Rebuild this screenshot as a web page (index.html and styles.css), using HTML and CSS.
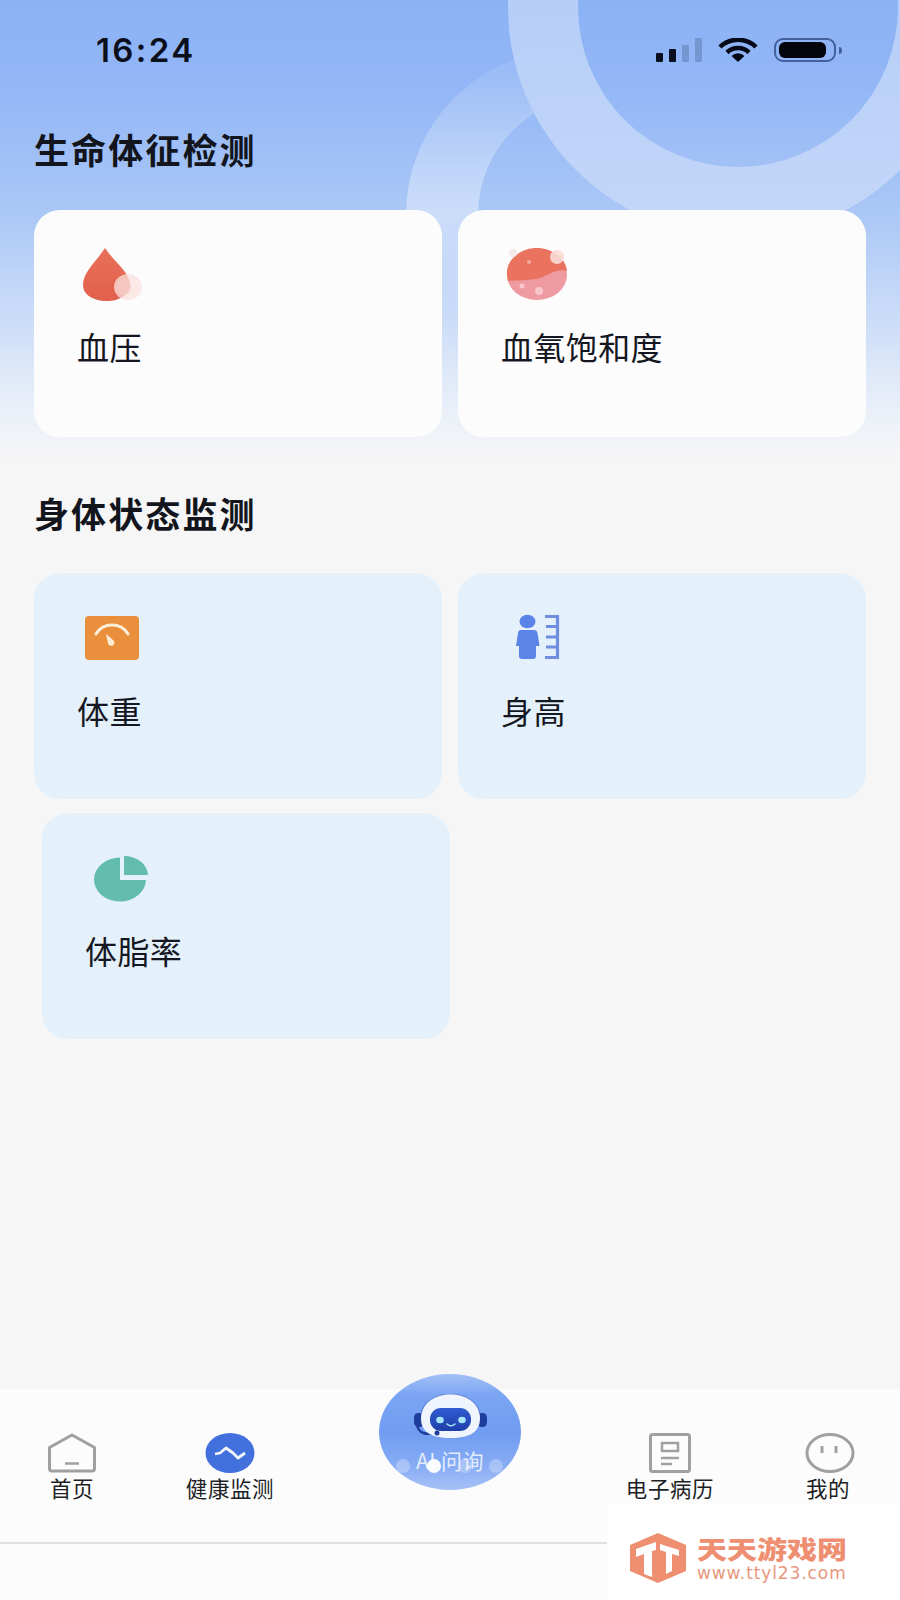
FILE: index.html
```html
<!DOCTYPE html>
<html lang="zh-CN">
<head>
<meta charset="utf-8">
<title>健康监测</title>
<link rel="stylesheet" href="styles.css">
</head>
<body>
<div class="page">
  <div class="backdrop">
    <svg class="rings" viewBox="0 0 900 460" width="900" height="460">
      <defs>
        <linearGradient id="smallRing" gradientUnits="userSpaceOnUse" x1="0" y1="60" x2="0" y2="310">
          <stop offset="0" stop-color="#fff" stop-opacity=".07"/>
          <stop offset=".6" stop-color="#fff" stop-opacity=".4"/>
          <stop offset="1" stop-color="#fff" stop-opacity="0"/>
        </linearGradient>
        <linearGradient id="bigRing" gradientUnits="userSpaceOnUse" x1="0" y1="0" x2="0" y2="240">
          <stop offset="0" stop-color="#b6cef8"/>
          <stop offset="1" stop-color="#c4d7f8"/>
        </linearGradient>
        <clipPath id="smallClip"><rect x="0" y="0" width="575" height="460"/></clipPath>
      </defs>
      <path clip-path="url(#smallClip)" fill-rule="evenodd" fill="url(#smallRing)" d="M406 215 A166 166 0 0 1 738 215 A166 166 0 0 1 406 215 Z M478 215 A120 120 0 0 0 718 215 A120 120 0 0 0 478 215 Z"/>
      <path fill-rule="evenodd" fill="url(#bigRing)" d="M508 7 A230 230 0 0 1 968 7 A230 230 0 0 1 508 7 Z M578 7 A160 160 0 0 0 898 7 A160 160 0 0 0 578 7 Z"/>
    </svg>
  </div>

  <header class="status">
    <span class="time">16:24</span>
    <div class="status-icons">
      <div class="signal"><i class="b1"></i><i class="b2"></i><i class="b3"></i><i class="b4"></i></div>
      <svg class="wifi" viewBox="0 0 40 24" width="40" height="24"><path d="M2 9 A26 26 0 0 1 38 9" fill="none" stroke="#060a18" stroke-width="4.5"/><path d="M9 14.5 A16 16 0 0 1 31 14.5" fill="none" stroke="#060a18" stroke-width="4.5"/><path d="M13.5 18 A9 9 0 0 1 26.500 18 L20 24 Z" fill="#060a18"/></svg>
      <div class="battery"><div class="battery-fill"></div></div>
      <div class="battery-nub"></div>
    </div>
  </header>

  <main class="content">
    <h2 class="section-title first">生命体征检测</h2>
    <div class="cards">
      <div class="card white">
        <svg class="card-icon" viewBox="0 0 70 56" width="70" height="56">
          <defs><linearGradient id="dropFill" x1="0" y1="0" x2="0" y2="1"><stop offset="0" stop-color="#e9705a"/><stop offset="1" stop-color="#e0604c"/></linearGradient></defs>
          <path d="M27 0 C36 14 52 24 52 37 C52 47 41 53 29 53 C16 53 5 47 5 37 C5 24 18 14 27 0 Z" fill="url(#dropFill)"/>
          <ellipse cx="50" cy="39" rx="14" ry="13" fill="#fbe3e0" opacity=".75"/>
          <ellipse cx="46" cy="39" rx="7" ry="8" fill="#f7c9c4" opacity=".6"/>
        </svg>
        <span class="card-label">血压</span>
      </div>
      <div class="card white">
        <svg class="card-icon" viewBox="0 0 70 56" width="70" height="56">
          <ellipse cx="35" cy="27" rx="30" ry="25" fill="#ee9aa0"/>
          <path d="M5 27 A30 25 0 0 1 65 23 C56 20 48 26 38 30 C28 33 14 32 6 33 Z" fill="#e9735f"/>
          <circle cx="55" cy="9" r="7" fill="#f9dcd8" opacity=".9"/>
          <circle cx="11" cy="5" r="4" fill="#f3e9e8"/>
          <circle cx="37" cy="43" r="4" fill="#f7c6cb"/>
          <circle cx="20" cy="38" r="2.500" fill="#f7c6cb"/>
          <circle cx="27" cy="14" r="2" fill="#f4a99c"/>
        </svg>
        <span class="card-label">血氧饱和度</span>
      </div>
    </div>

    <h2 class="section-title second">身体状态监测</h2>
    <div class="cards">
      <div class="card blue">
        <svg class="card-icon" viewBox="0 0 70 56" width="70" height="56">
          <rect x="7" y="5" width="54" height="44" rx="4" fill="#ea8f3c"/>
          <path d="M18 23 C25 11 43 11 50 23" fill="none" stroke="#fdeed8" stroke-width="3" stroke-linecap="round"/>
          <path d="M28 23 L35 29 A3.200 3.200 0 1 1 30 32 Z" fill="#fdeed8"/>
        </svg>
        <span class="card-label">体重</span>
      </div>
      <div class="card blue">
        <svg class="card-icon" viewBox="0 0 70 56" width="70" height="56">
          <ellipse cx="25.500" cy="10.500" rx="8" ry="6.800" fill="#5b84e8"/>
          <path d="M19 19 H32 C34 19 35 20 35.500 22 L37.500 35 H34 V45 C34 47 33 48 31 48 H20 C18 48 17 47 17 45 V35 H14 L16 22 C16.500 20 17 19 19 19 Z" fill="#5b84e8"/>
          <path d="M43 5.500 H55.500 V46.500 H43 M44 15.500 H55 M44 26 H55 M44 36 H55" fill="none" stroke="#6f8edf" stroke-width="3.200"/>
        </svg>
        <span class="card-label">身高</span>
      </div>
      <div class="card blue shifted">
        <svg class="card-icon" viewBox="0 0 70 56" width="70" height="56">
          <path d="M34 6.500 A26 22 0 1 0 60 29 H34 Z" fill="#62bdac"/>
          <path d="M38 5 A24 19.500 0 0 1 62 24 H38 Z" fill="#62bdac"/>
        </svg>
        <span class="card-label">体脂率</span>
      </div>
    </div>
  </main>

  <nav class="tabbar">
    <div class="tabs">
      <div class="tab">
        <svg viewBox="0 0 50 40" width="50" height="40"><path d="M2.500 14.500 L25 2 L47.500 14.500 V35.500 Q47.500 38 45 38 H5 Q2.500 38 2.500 35.500 Z" fill="none" stroke="#a0a0a0" stroke-width="3" stroke-linejoin="round"/><path d="M18 30.500 H32" stroke="#a0a0a0" stroke-width="2.500"/></svg>
        <span class="tab-label">首页</span>
      </div>
      <div class="tab">
        <svg viewBox="0 0 50 40" width="50" height="40"><ellipse cx="25" cy="20" rx="24.500" ry="20" fill="#4271de"/><path d="M10 21 L15 20 L21 15 L28 20 L33 25 L40 20" fill="none" stroke="#f4f7fd" stroke-width="2.800" stroke-linejoin="round"/></svg>
        <span class="tab-label">健康监测</span>
      </div>
      <div class="ai-ball">
        <svg class="robot" viewBox="0 0 80 46" width="80" height="46">
          <defs><linearGradient id="visor" x1="0" y1="0" x2="0" y2="1"><stop offset="0" stop-color="#2f5bd2"/><stop offset="1" stop-color="#1f3fa8"/></linearGradient></defs>
          <rect x="4" y="19" width="10" height="14" rx="4.500" fill="#1f3d9c"/>
          <rect x="67" y="19" width="10" height="14" rx="4.500" fill="#1f3d9c"/>
          <path d="M7 30 C8 40 16 41 27 39" fill="none" stroke="#1f3d9c" stroke-width="2.500" stroke-linecap="round"/>
          <path d="M40.500 0 C58 0 70 10 70 24 C70 38 60 44 40.500 44 C21 44 11 38 11 24 C11 10 23 0 40.500 0 Z" fill="#f0f4fd"/>
          <path d="M11 20 C13 9 24 0 40.500 0 C57 0 68 9 70 20" fill="none" stroke="#3a5fc4" stroke-width="1.200" opacity=".6"/>
          <circle cx="27" cy="39" r="2.500" fill="#1f3d9c"/>
          <rect x="20" y="14" width="41" height="23" rx="11" fill="url(#visor)"/>
          <ellipse cx="30" cy="26" rx="3.800" ry="3.200" fill="#a8e4fb"/>
          <ellipse cx="52" cy="26" rx="3.800" ry="3.200" fill="#a8e4fb"/>
          <path d="M37 30 Q41 33.500 45 30" fill="none" stroke="#a8e4fb" stroke-width="1.600" stroke-linecap="round"/>
        </svg>
        <span class="ai-label">AI 问询</span>
        <div class="dots"><i class="dot"></i><i class="dot strong"></i><i class="dot"></i><i class="dot"></i></div>
      </div>
      <div class="tab">
        <svg viewBox="0 0 42 40" width="42" height="40"><rect x="1.500" y="1.500" width="39" height="37" rx="2" fill="none" stroke="#a0a0a0" stroke-width="3"/><rect x="13" y="10" width="16" height="8" fill="none" stroke="#a0a0a0" stroke-width="2.500"/><path d="M12 25 H30 M12 31 H23" stroke="#a0a0a0" stroke-width="2.500"/></svg>
        <span class="tab-label">电子病历</span>
      </div>
      <div class="tab">
        <svg class="me-icon" viewBox="0 0 50 40" width="50" height="40"><ellipse cx="25" cy="20" rx="23" ry="18.500" fill="none" stroke="#a0a0a0" stroke-width="3"/><path d="M17 13 V20 M31 13 V20" stroke="#a0a0a0" stroke-width="3"/></svg>
        <span class="tab-label">我的</span>
      </div>
    </div>
    <div class="tab-rule"></div>
    <div class="watermark">
      <svg viewBox="0 0 58 50" width="58" height="50"><path d="M29 0 L57 12 V38 L29 50 L1 38 V12 Z" fill="#ee8f72"/><path d="M7 16 L27 9 V17 L23 18 V44 L15 41 V21 L7 24 Z M31 11 L50 17 V23 L43 21 V38 L37 41 V19 L31 17 Z" fill="#fff"/></svg>
      <div class="wm-text">
        <span class="wm-name">天天游戏网</span>
        <span class="wm-url">www.ttyl23.com</span>
      </div>
    </div>
  </nav>
</div>
</body>
</html>
```

FILE: styles.css
```css
* { box-sizing: border-box; }
html, body { margin: 0; padding: 0; }
body {
  background: #f6f6f7;
  font-family: "Noto Sans CJK SC", "Liberation Sans", sans-serif;
  color: #14171f;
}
.page {
  position: relative;
  width: 900px;
  height: 1600px;
  display: flex;
  flex-direction: column;
  overflow: hidden;
}
.backdrop {
  position: absolute;
  inset: 0 0 auto 0;
  height: 460px;
  background: linear-gradient(180deg, #8cb2f6 0%, #92b6f6 18%, #a9c6f6 45%, #cfdff8 72%, #e9eff9 88%, #f6f6f7 100%);
  overflow: hidden;
}
.rings { display: block; }

.status {
  position: relative;
  height: 100px;
  flex: none;
  display: flex;
  justify-content: space-between;
  align-items: flex-start;
  padding: 29px 58px 0 96px;
}
.time {
  font-family: "Inter", "Liberation Sans", sans-serif;
  font-size: 33px;
  line-height: 42px;
  font-weight: 600;
  letter-spacing: 2.400px;
  color: #0b0f1c;
}
.status-icons {
  display: flex;
  align-items: center;
  margin-top: 9px;
}
.signal {
  display: flex;
  align-items: flex-end;
  gap: 6px;
  height: 24px;
  margin-right: 16px;
}
.signal i { display: block; width: 7px; border-radius: 1px; background: #0b1020; }
.signal .b1 { height: 9px; }
.signal .b2 { height: 13px; }
.signal .b3 { height: 17px; background: #6e8fc8; opacity: .8; }
.signal .b4 { height: 24px; background: #6e8fc8; opacity: .8; }
.wifi { display: block; margin-right: 16px; }
.battery {
  width: 62px;
  height: 24px;
  border: 2px solid #44609c;
  border-radius: 9px;
  padding: 2px 8px 2px 3px;
}
.battery-fill { width: 100%; height: 100%; background: #03050c; border-radius: 6px; }
.battery-nub {
  width: 3px;
  height: 7px;
  margin-left: 3px;
  background: #44609c;
  border-radius: 0 3px 3px 0;
}

.content {
  position: relative;
  flex: 1;
  padding: 0 0 0 34px;
}
.section-title {
  margin: 0;
  font-size: 35px;
  line-height: 46px;
  font-weight: 700;
  letter-spacing: 2.100px;
  color: #12151c;
}
.section-title.first { margin-top: 26px; margin-bottom: 38px; }
.section-title.second { margin-top: 53px; margin-bottom: 37px; }
.cards {
  display: grid;
  grid-template-columns: 408px 408px;
  column-gap: 16px;
  row-gap: 14px;
}
.card {
  height: 227px;
  border-radius: 26px;
  padding: 38px 0 0 43px;
  display: flex;
  flex-direction: column;
  align-items: flex-start;
}
.card.white { background: #fcfcfd; }
.card.blue { background: #e4f0fa; height: 226px; }
.card.shifted { margin-left: 8px; width: 408px; }
.card-icon { display: block; margin-left: 1px; flex: none; }
.card-label {
  margin-top: 22px;
  font-size: 32px;
  line-height: 40px;
  letter-spacing: .4px;
  color: #14171f;
}
.card.blue .card-label { margin-top: 23px; }

.tabbar {
  position: relative;
  flex: none;
  height: 211px;
  background: #fcfcfd;
  display: flex;
  flex-direction: column;
}
.tabs {
  display: grid;
  grid-template-columns: 144px 172px 268px 172px 144px;
  padding-top: 44px;
  height: 153px;
}
.tab {
  display: flex;
  flex-direction: column;
  align-items: center;
  gap: 2px;
}
.tab svg { display: block; }
.tab .me-icon { margin-left: 4px; }
.tab-label {
  font-size: 21.500px;
  line-height: 26px;
  letter-spacing: .6px;
  color: #1c1f26;
}
.tab-rule { height: 2px; background: #e0e0e2; }
.ai-ball {
  position: relative;
  justify-self: center;
  width: 142px;
  height: 116px;
  margin-top: -59px;
  border-radius: 50%;
  background: linear-gradient(180deg, #a3c0f7 0%, #7ba5f3 18%, #709df1 50%, #86abf4 78%, #a6c1f7 100%);
  display: flex;
  flex-direction: column;
  align-items: center;
  padding-top: 20px;
}
.robot { display: block; flex: none; }
.ai-label {
  margin-top: 6px;
  font-size: 21px;
  line-height: 28px;
  letter-spacing: .5px;
  color: rgba(255, 255, 255, .8);
  white-space: nowrap;
}
.dots {
  position: absolute;
  left: 17px;
  top: 85px;
  display: flex;
  gap: 17px;
}
.dot {
  display: block;
  width: 14px;
  height: 14px;
  border-radius: 50%;
  background: rgba(255, 255, 255, .28);
}
.dot.strong { background: rgba(255, 255, 255, .95); }
.watermark {
  position: absolute;
  right: 0;
  bottom: 0;
  width: 293px;
  height: 96px;
  background: #fff;
  display: flex;
  align-items: center;
  gap: 10px;
  padding: 12px 0 0 22px;
}
.watermark svg { display: block; flex: none; }
.wm-text { display: flex; flex-direction: column; }
.wm-name {
  display: block;
  font-size: 30px;
  line-height: 30px;
  font-weight: 900;
  transform: scaleY(.84);
  color: #ee8f72;
  white-space: nowrap;
}
.wm-url {
  font-family: "DejaVu Sans", sans-serif;
  font-size: 17px;
  line-height: 20px;
  letter-spacing: .9px;
  color: #e8967c;
  white-space: nowrap;
}
```
